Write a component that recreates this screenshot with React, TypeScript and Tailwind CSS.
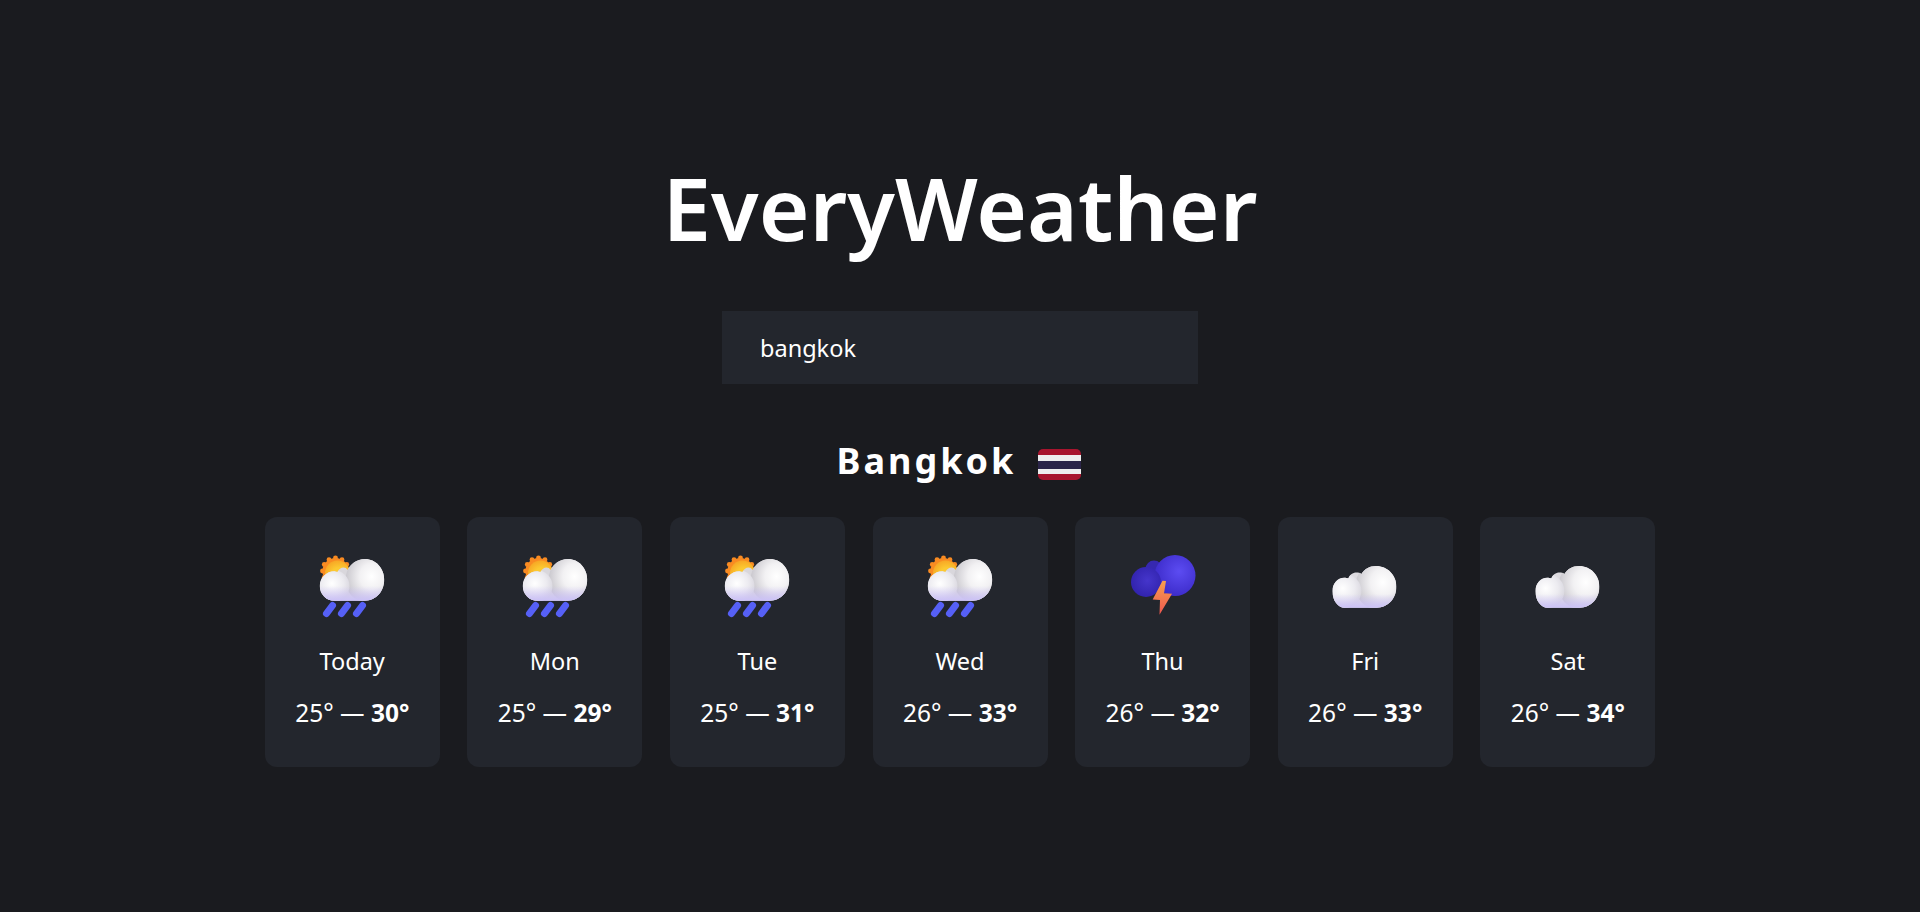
const days = [
  { name: "Today", low: 25, high: 30, icon: "rain" },
  { name: "Mon", low: 25, high: 29, icon: "rain" },
  { name: "Tue", low: 25, high: 31, icon: "rain" },
  { name: "Wed", low: 26, high: 33, icon: "rain" },
  { name: "Thu", low: 26, high: 32, icon: "storm" },
  { name: "Fri", low: 26, high: 33, icon: "cloud" },
  { name: "Sat", low: 26, high: 34, icon: "cloud" },
];

const sunBumps = [0, 30, 60, 90, 120, 150, 180, 210, 240, 270, 300, 330];

function Defs() {
  return (
    <svg className="absolute h-0 w-0" aria-hidden>
      <defs>
        <radialGradient id="lobeBig" cx="0.65" cy="0.42" r="0.65">
          <stop offset="0" stopColor="#ffffff" />
          <stop offset="0.45" stopColor="#f2f1f3" />
          <stop offset="1" stopColor="#c9c7cd" />
        </radialGradient>
        <radialGradient id="lobeSmall" cx="0.45" cy="0.42" r="0.6">
          <stop offset="0" stopColor="#ffffff" />
          <stop offset="0.6" stopColor="#ecebf0" />
          <stop offset="1" stopColor="#d8d6de" />
        </radialGradient>
        <linearGradient id="lilac" x1="0" y1="0" x2="0" y2="1">
          <stop offset="0" stopColor="#cfc5f8" stopOpacity="0" />
          <stop offset="1" stopColor="#cbc1f8" />
        </linearGradient>
        <radialGradient id="sun" cx="0.55" cy="0.6" r="0.6">
          <stop offset="0.5" stopColor="#fcc931" />
          <stop offset="1" stopColor="#f7a825" />
        </radialGradient>
        <radialGradient id="stormBig" cx="0.6" cy="0.4" r="0.65">
          <stop offset="0" stopColor="#5c4cf2" />
          <stop offset="1" stopColor="#3b2ac8" />
        </radialGradient>
        <radialGradient id="stormSmall" cx="0.55" cy="0.45" r="0.6">
          <stop offset="0" stopColor="#4535cb" />
          <stop offset="1" stopColor="#3022ac" />
        </radialGradient>
        <linearGradient id="bolt" x1="0" y1="0" x2="0" y2="1">
          <stop offset="0" stopColor="#f7a04e" />
          <stop offset="1" stopColor="#ef5650" />
        </linearGradient>
        <clipPath id="rainCloud">
          <path d="M35 60.700H65C77 60.700 84.700 51 84.700 39.500 84.700 28 76 19 65.500 19 57 19 51 24 48 30 46 26 40 27 38 32 36 31.500 35 31.300 35 31.300A14.700 14.700 0 0 0 35 60.700z" />
        </clipPath>
        <clipPath id="plainCloud">
          <path d="M35 67.700H67C79 67.700 87 58 87 46.500 87 35 78 26 66.500 26 60 26 55 29 52 34 48 31.500 42 32 39 38.300 38 38 36 37.700 35 37.700 28 37.700 23 44 23 51 23 61 29 67.700 35 67.700z" />
        </clipPath>
      </defs>
    </svg>
  );
}

function RainIcon() {
  return (
    <svg viewBox="2.5 0 100 80" className="h-20 w-[100px]">
      {sunBumps.map((a) => (
        <circle
          key={a}
          cx={36 + 13 * Math.cos((a * Math.PI) / 180)}
          cy={31 + 13 * Math.sin((a * Math.PI) / 180)}
          r="2.400"
          fill="#f98b22"
        />
      ))}
      <circle cx="36" cy="31" r="13" fill="#f98b22" />
      <circle cx="38" cy="33" r="12.500" fill="url(#sun)" />
      <g clipPath="url(#rainCloud)">
        <rect x="15" y="15" width="75" height="50" fill="#d9d7dc" />
        <ellipse cx="66" cy="40" rx="20" ry="22" fill="url(#lobeBig)" />
        <circle cx="34" cy="46" r="16" fill="url(#lobeSmall)" />
        <rect x="15" y="46" width="75" height="15" fill="url(#lilac)" />
      </g>
      <g stroke="#5660f6" strokeWidth="7" strokeLinecap="round">
        <path d="M27 73.500 33 65.500" />
        <path d="M42 73.500 48 65.500" />
        <path d="M57 73.500 63 65.500" />
      </g>
    </svg>
  );
}

function StormIcon() {
  return (
    <svg viewBox="3 0 100 80" className="h-20 w-[100px]">
      <circle cx="44" cy="29" r="8.500" fill="#3628b0" />
      <circle cx="65" cy="35.500" r="20.500" fill="url(#stormBig)" />
      <circle cx="36" cy="42" r="15" fill="url(#stormSmall)" />
      <path d="M52.500 40.700 56 41 54 53.300 62 53.700 49.500 74.700 50 60 42.700 59.500z" fill="url(#bolt)" />
    </svg>
  );
}

function CloudIcon() {
  return (
    <svg viewBox="5.600 0 100 80" className="h-20 w-[100px]">
      <g clipPath="url(#plainCloud)">
        <rect x="15" y="20" width="75" height="50" fill="#dddbe0" />
        <ellipse cx="67" cy="46" rx="21" ry="23" fill="url(#lobeBig)" />
        <circle cx="35" cy="51" r="17" fill="url(#lobeSmall)" />
        <rect x="15" y="54" width="75" height="14" fill="url(#lilac)" />
      </g>
    </svg>
  );
}

function Flag() {
  return (
    <div className="mr-[2px] flex h-[31px] w-[43px] flex-col overflow-hidden rounded-[5px]">
      <div className="h-[6px] bg-[#a8152e]" />
      <div className="h-[6px] bg-[#eeeeee]" />
      <div className="h-[8px] bg-[#2b2549]" />
      <div className="h-[5px] bg-[#eeeeee]" />
      <div className="h-[6px] bg-[#a8152e]" />
    </div>
  );
}

export default function App() {
  return (
    <div className="flex min-h-[912px] flex-col items-center bg-[#1a1b1f] pt-[147px] font-['Noto_Sans',sans-serif] text-white">
      <Defs />
      <h1 className="text-[87px] font-semibold leading-[120px]">EveryWeather</h1>
      <input
        readOnly
        value="bangkok"
        className="mt-[44px] h-[73px] w-[476px] bg-[#23262d] px-[38px] text-[23.500px] text-white outline-none"
      />
      <div className="mt-[57px] flex h-[46px] items-center gap-[22px]">
        <h2 className="pb-[7px] text-[36px] font-bold tracking-[3px]">Bangkok</h2>
        <Flag />
      </div>
      <div className="mt-[30px] flex gap-[27.600px]">
        {days.map((d) => (
          <div key={d.name} className="flex h-[250px] w-[175px] flex-col items-center rounded-[12px] bg-[#23262d] pt-[23px]">
            {d.icon === "rain" && <RainIcon />}
            {d.icon === "storm" && <StormIcon />}
            {d.icon === "cloud" && <CloudIcon />}
            <p className="mt-[26px] text-[23.500px] leading-[30px]">{d.name}</p>
            <p className="mt-[22px] text-[24.500px] leading-[30px]">
              {d.low}° — <b className="font-bold">{d.high}°</b>
            </p>
          </div>
        ))}
      </div>
    </div>
  );
}
